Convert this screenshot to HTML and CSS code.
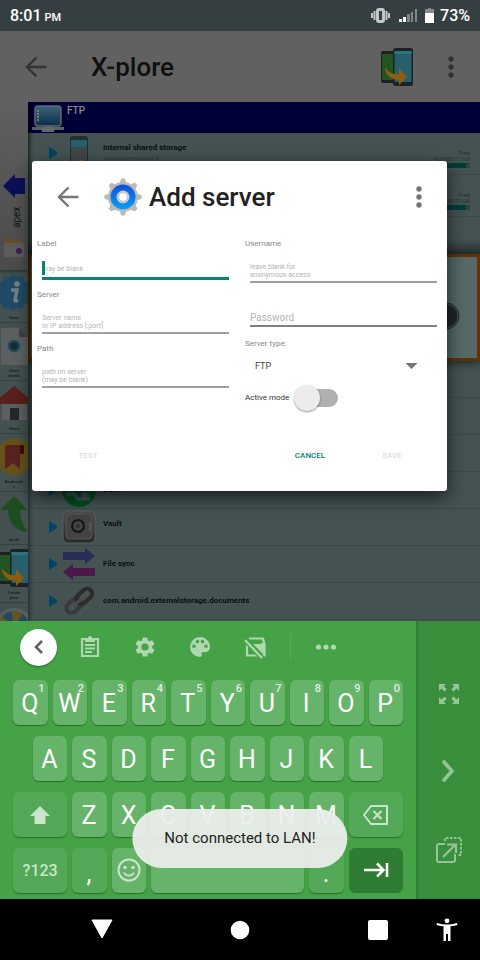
FILE: index.html
```html
<!DOCTYPE html>
<html lang="en">
<head>
<meta charset="utf-8">
<meta name="viewport" content="width=device-width, initial-scale=1">
<title>X-plore</title>
<link rel="stylesheet" href="styles.css">
</head>
<body>
<svg class="defs" aria-hidden="true">
  <defs>
    <linearGradient id="screen" x1="0" y1="0" x2="0" y2="1"><stop offset="0" stop-color="#3b6478"/><stop offset="1" stop-color="#0c2c48"/></linearGradient>
    <linearGradient id="ring" x1="0" y1="0" x2="0" y2="1"><stop offset="0" stop-color="#0d4fd8"/><stop offset="1" stop-color="#0aa0f5"/></linearGradient>
    <linearGradient id="metal" x1="0" y1="0" x2="0" y2="1"><stop offset="0" stop-color="#4c4c4c"/><stop offset="1" stop-color="#292929"/></linearGradient>
    <symbol id="back" viewBox="0 0 24 24"><path d="M12.500 2.500 3 12l9.500 9.500M3.500 12H22.500" fill="none" stroke="currentColor" stroke-width="2.400"/></symbol>
    <symbol id="dots" viewBox="0 0 8 24"><g fill="currentColor"><circle cx="4" cy="4" r="2.700"/><circle cx="4" cy="12" r="2.700"/><circle cx="4" cy="20" r="2.700"/></g></symbol>
    <symbol id="switch" viewBox="0 0 32 38">
      <rect x="0" y="3" width="18" height="32" rx="2" fill="#1c2122"/><rect x="1" y="6" width="16" height="26" fill="#235423"/>
      <rect x="12" y="0" width="20" height="38" rx="2.500" fill="#1c2122"/><rect x="13.500" y="3" width="17" height="31" fill="#285f6c"/><rect x="13.500" y="3" width="17" height="3" fill="#2f7383"/>
      <path d="M4 19c3 5 8 8 14 7v-6l8 9-8 8v-5C10 32 4 27 4 19z" fill="#8b5f0c"/>
    </symbol>
    <symbol id="play" viewBox="0 0 8 12"><path d="M0 0l8 5v2l-8 5z" fill="#004466"/></symbol>
  </defs>
</svg>
<div class="phone">
  <header class="status">
    <span class="time">8:01 <small>PM</small></span>
    <span class="status-icons">
      <svg class="vibrate" viewBox="0 0 19 15"><path d="M1 5v5M3.500 3v9M15.500 3v9M18 5v5" stroke="#c3c6c7" stroke-width="2"/><rect x="6.500" y="1.500" width="6" height="12" rx="1.500" fill="none" stroke="#c3c6c7" stroke-width="3"/></svg>
      <svg class="signal" viewBox="0 0 18 13"><path d="M0 10h3v3H0zM4 8h3v5H4z" fill="#fff"/><path d="M8 5h3v8H8zM12 3h2v10h-2zM16 0h2v13h-2z" fill="#818788"/></svg>
      <svg class="battery" viewBox="0 0 9 15"><path d="M3 0h3v1h3v5H0V1h3z" fill="#858b8c"/><path d="M0 5h9v10H0z" fill="#fff"/></svg>
      <span>73%</span>
    </span>
  </header>

  <main class="app">
    <div class="appbar">
      <button class="icon-btn" aria-label="Back"><svg class="i24"><use href="#back"/></svg></button>
      <h1>X-plore</h1>
      <button class="icon-btn" aria-label="Switch pane"><svg class="i-switch"><use href="#switch"/></svg></button>
      <button class="icon-btn" aria-label="More"><svg class="i-dots"><use href="#dots"/></svg></button>
    </div>
    <div class="panes">
      <aside class="side">
        <div class="tabs">
          <svg class="tab-arrow" viewBox="0 0 22 24"><path d="M0 12 12 0v4h10v16H12v4z" fill="#0b1058"/></svg>
          <span class="tab-name">apex</span>
          <svg class="tab-folder" viewBox="0 0 20 18"><path d="M1 0h7l2 2h9v8H1z" fill="#69501b"/><rect y="4" width="20" height="14" rx="2" fill="#5c5c5c"/><circle cx="15" cy="12" r="3" fill="#3b2049"/></svg>
        </div>
        <div class="tool"><svg viewBox="0 0 28 38"><path d="M14 0l4 3 5-1 1 5 5 2-1 5 2 5-2 5 1 4-5 2-2 5-5-1-4 3-4-3-5 1-2-5-4-2 1-5-3-4 3-5-1-5 5-2 1-5 5 1z" fill="#1f4a65"/><circle cx="17" cy="10" r="2.800" fill="#708185"/><path d="M11 16h6l-2 10q0 2 3 0" fill="none" stroke="#708185" stroke-width="3.500"/></svg><span>News</span></div>
        <div class="tool"><svg viewBox="0 0 28 38"><path d="M1 1h18l9 9v28H1z" fill="#5d6061"/><path d="M19 1v9h9z" fill="#3e4142"/><circle cx="14" cy="19" r="5" fill="#242829" stroke="#164b66" stroke-width="2.500"/></svg><span>Show<br>details</span></div>
        <div class="tool"><svg viewBox="0 0 28 38"><path d="M2 17h25v18H2z" fill="#5c5e5f"/><path d="M14 1 30 14v5H-2v-5z" fill="#59201c"/><path d="M10 23h9v12h-9z" fill="#232728"/></svg><span>Home</span></div>
        <div class="tool"><svg viewBox="0 0 28 38"><circle cx="14" cy="19" r="18.500" fill="#66511b"/><path d="M5 9q0-2 2-2h17v9h-4v15l-7-6-8 6z" fill="#59211f"/><path d="M20 7h4v9h-4z" fill="#3c0e0e"/></svg><span>Bookmark<br>s</span></div>
        <div class="tool"><svg viewBox="0 0 28 38"><path d="M14 0 28 14h-8q0 13 8 22Q9 34 8 14H0z" fill="#1f4d22"/></svg><span>Up dir</span></div>
        <div class="tool"><svg viewBox="2 0 28 38"><use href="#switch" width="32" height="38"/></svg><span>Switch<br>pane</span></div>
        <div class="tool"><svg viewBox="0 0 28 38"><circle cx="14" cy="19" r="18" fill="#56605f"/><circle cx="14" cy="19" r="10" fill="none" stroke="#64531f" stroke-width="10" stroke-dasharray="8 7"/><circle cx="14" cy="19" r="10" fill="none" stroke="#27465c" stroke-width="10" stroke-dasharray="7 8" stroke-dashoffset="7"/></svg></div>
      </aside>
      <section class="files">
        <div class="path"><svg viewBox="0 0 32 27"><path d="M0 22h32v3H0z" fill="#5b6266"/><path d="M12 20h8v3h2v4H10v-4h3z" fill="#62696d"/><rect x="3" y="1" width="26" height="20" rx="3" fill="url(#screen)" stroke="#5d686e" stroke-width="1.500"/><path d="M6 5v12" stroke="#71827c" stroke-width="2" stroke-dasharray="2 1"/></svg><span>FTP</span></div>
        <div class="row volume">
          <svg class="play"><use href="#play"/></svg>
          <svg class="pic" viewBox="0 0 34 34"><rect x="8" y="0" width="18" height="33" rx="3" fill="#252c2d"/><path d="M9 4h16v7H9z" fill="#24616e"/><path d="M9 11h16v18H9z" fill="#414748"/><circle cx="20" cy="29" r="5" fill="#77611b"/></svg>
          <div class="name"><b>Internal shared storage</b><small>/storage/emulated/0</small></div>
          <div class="free">Free<br>420MB/11GB<i></i></div>
        </div>
        <div class="row volume">
          <svg class="play"><use href="#play"/></svg>
          <span class="pic"></span>
          <div class="name"></div>
          <div class="free">Free<br>417MB/11GB<i></i></div>
        </div>
        <div class="spacer"></div>
        <div class="current"><svg viewBox="0 0 28 28"><circle cx="14" cy="14" r="12" fill="#1e2626" stroke="#465454" stroke-width="1"/><circle cx="14" cy="14" r="13" fill="none" stroke="#1e2626"/></svg></div>
        <div class="row"></div>
        <div class="row"></div>
        <div class="row"></div>
        <div class="row"><svg class="play"><use href="#play"/></svg><svg class="pic" viewBox="0 0 34 34"><circle cx="17" cy="17" r="17" fill="#034c22"/><path d="M4 21h8l4 5h12" fill="none" stroke="#445252" stroke-width="3"/><circle cx="23" cy="23" r="4" fill="#445252"/></svg><div class="name"><b>DLNA</b></div></div>
        <div class="row"><svg class="play"><use href="#play"/></svg><svg class="pic" viewBox="0 0 34 34"><rect x="1" y="1" width="32" height="32" rx="5" fill="url(#metal)" stroke="#585c5c"/><rect x="4" y="4" width="26" height="25" rx="4" fill="#434343" stroke="#555"/><circle cx="16" cy="16" r="6" fill="#343434" stroke="#161616" stroke-width="2"/><circle cx="16" cy="16" r="3.500" fill="none" stroke="#555"/><path d="M28 12v9" stroke="#686868"/></svg><div class="name two-line"><b>Vault</b></div></div>
        <div class="row"><svg class="play"><use href="#play"/></svg><svg class="pic" viewBox="0 0 34 34"><path d="M1 5h22V1l10 8-10 8v-4H1z" fill="#292d58"/><path d="M33 21H11v-4L1 25l10 8v-4h22z" fill="#4d174c"/></svg><div class="name"><b>File sync</b></div></div>
        <div class="row"><svg class="play"><use href="#play"/></svg><svg class="pic" viewBox="0 0 34 34"><g fill="none" stroke-width="4" transform="rotate(-42 17 17)"><rect x="2" y="12" width="17" height="10" rx="5" stroke="#383a3a"/><rect x="15" y="12" width="18" height="10" rx="5" stroke="#2b2b2b"/><path d="M10 17h13" stroke="#4b4c4c" stroke-width="3"/></g></svg><div class="name"><b>com.android.externalstorage.documents</b></div></div>
        <div class="row"></div>
      </section>
    </div>
  </main>

  <section class="keyboard" aria-label="Keyboard">
    <div class="kb-main">
      <div class="kb-tools">
        <button class="round" aria-label="Close toolbar"><svg viewBox="0 0 24 24"><path d="M15 6l-6 6 6 6" fill="none" stroke="#616161" stroke-width="2.600"/></svg></button>
        <button aria-label="Clipboard"><svg viewBox="0 0 24 24"><path d="M4 4h16v17H4z" fill="none" stroke="currentColor" stroke-width="2.200"/><path d="M7 3h3a2 2 0 0 1 4 0h3v4H7z" fill="currentColor"/><path d="M7 10h10M7 13.500h10M7 17h7" stroke="currentColor" stroke-width="1.800"/></svg></button>
        <button aria-label="Settings"><svg viewBox="0 0 24 24"><path fill="currentColor" d="M19.140 12.940c.04-.3.06-.61.06-.94s-.02-.64-.07-.94l2.030-1.580a.49.49 0 0 0 .12-.61l-1.920-3.320a.49.49 0 0 0-.59-.22l-2.390.96a7 7 0 0 0-1.620-.94l-.36-2.540a.48.48 0 0 0-.48-.41h-3.840a.48.48 0 0 0-.47.410l-.36 2.540c-.59.24-1.130.57-1.620.94l-2.390-.96a.48.48 0 0 0-.59.220L2.740 8.870a.48.48 0 0 0 .12.610l2.030 1.580a7 7 0 0 0 0 1.880l-2.030 1.580a.49.49 0 0 0-.12.610l1.920 3.320c.12.220.37.290.59.220l2.390-.96c.5.380 1.030.7 1.620.94l.36 2.540c.05.240.24.410.48.410h3.840c.24 0 .44-.17.470-.41l.36-2.540a7 7 0 0 0 1.620-.94l2.390.96c.22.080.47 0 .59-.22l1.920-3.320a.47.470 0 0 0-.12-.61zM12 15.600a3.600 3.600 0 1 1 0-7.200 3.600 3.600 0 0 1 0 7.200z"/></svg></button>
        <button aria-label="Theme"><svg viewBox="0 0 24 24"><path fill="currentColor" fill-rule="evenodd" d="M12 2a10 10 0 0 0 0 20c1.300 0 2-1 1.700-2.200-.5-1.600.1-2.800 1.800-2.800H18a4.500 4.500 0 0 0 4-5C22 6.500 17.500 2 12 2zM6 13a1.800 1.800 0 1 1 0-3.600A1.800 1.800 0 0 1 6 13zm3.500-4.700a1.800 1.800 0 1 1 0-3.600 1.800 1.800 0 0 1 0 3.600zm5 0a1.800 1.800 0 1 1 0-3.600 1.800 1.800 0 0 1 0 3.600zM18 13a1.800 1.800 0 1 1 0-3.600 1.800 1.800 0 0 1 0 3.600z"/></svg></button>
        <button aria-label="Theme off"><svg viewBox="0 0 24 24"><path d="M6 3.500h14l1.500 6v11H4V7M4 20.500h17" fill="none" stroke="currentColor" stroke-width="2.200"/><path d="M10 9h7l5-2v14z" fill="currentColor"/><path d="M2 5l17 18" stroke="#45a247" stroke-width="5"/><path d="M2 5l17 18" stroke="currentColor" stroke-width="2.200"/></svg></button>
        <button class="more" aria-label="More tools"><svg viewBox="0 0 24 24"><g fill="currentColor"><circle cx="4.500" cy="12" r="2.600"/><circle cx="12" cy="12" r="2.600"/><circle cx="19.500" cy="12" r="2.600"/></g></svg></button>
      </div>
      <div class="keys">
        <button>Q<sup>1</sup></button><button>W<sup>2</sup></button><button>E<sup>3</sup></button><button>R<sup>4</sup></button><button>T<sup>5</sup></button><button>Y<sup>6</sup></button><button>U<sup>7</sup></button><button>I<sup>8</sup></button><button>O<sup>9</sup></button><button>P<sup>0</sup></button>
        <button class="indent">A</button><button>S</button><button>D</button><button>F</button><button>G</button><button>H</button><button>J</button><button>K</button><button>L</button>
        <button class="wide alt newline" aria-label="Shift"><svg viewBox="0 0 24 24"><path d="M12 3 22 13h-4.500v8h-11v-8H2z" fill="currentColor"/></svg></button><button>Z</button><button>X</button><button>C</button><button>V</button><button>B</button><button>N</button><button>M</button><button class="wide alt" aria-label="Delete"><svg class="i-wide" viewBox="0 0 28 24"><path d="M9 3h16v18H9L2 12z" fill="none" stroke="currentColor" stroke-width="2" stroke-linejoin="round"/><path d="M11.500 8l8 8M19.500 8l-8 8" stroke="currentColor" stroke-width="2"/></svg></button>
        <button class="wide alt sym">?123</button><button class="alt mark">,</button><button class="emoji" aria-label="Emoji"><svg viewBox="0 0 24 24"><circle cx="12" cy="12" r="10.500" fill="none" stroke="currentColor" stroke-width="2"/><circle cx="8" cy="9.500" r="1.700" fill="currentColor"/><circle cx="16" cy="9.500" r="1.700" fill="currentColor"/><path d="M7 14.500a5.500 5.500 0 0 0 10 0" fill="none" stroke="currentColor" stroke-width="1.800"/></svg></button><button class="space" aria-label="Space"></button><button class="alt mark">.</button><button class="wide enter" aria-label="Next"><svg class="i-wide" viewBox="0 0 28 24"><path d="M2 11h19M15 4.500l6.500 6.500-6.500 6.500M25 4v14" fill="none" stroke="currentColor" stroke-width="2.500"/></svg></button>
      </div>
    </div>
    <div class="kb-side">
      <button aria-label="Full size"><svg viewBox="0 0 24 24"><path fill="currentColor" d="M2 2h7L6.700 4.300l3 3-2.200 2.200-3-3L2 9zM22 2v7l-2.500-2.500-3 3-2.200-2.200 3-3L15 2zM2 22v-7l2.500 2.500 3-3 2.200 2.200-3 3L9 22zM22 22h-7l2.300-2.300-3-3 2.200-2.200 3 3L22 15z"/></svg></button>
      <button aria-label="Move right"><svg viewBox="0 0 24 24"><path d="M7 3l8 9-8 9" fill="none" stroke="currentColor" stroke-width="3.600" stroke-linecap="round"/></svg></button>
      <button aria-label="Float"><svg class="i-float" viewBox="0 0 28 28"><path d="M10 8H4q-2 0-2 2v14q0 2 2 2h14q2 0 2-2v-6" fill="none" stroke="currentColor" stroke-width="2"/><path d="M8 21 20 9M12 8.500h9V17" fill="none" stroke="currentColor" stroke-width="2.200"/><path d="M10 5V2h16v17h-4" fill="none" stroke="currentColor" stroke-width="2" stroke-dasharray="2.500 1.500"/></svg></button>
    </div>
  </section>

  <nav class="navbar">
    <div class="nav-main">
      <button aria-label="Back"><svg viewBox="0 0 24 24"><path d="M2 2h20L12 20z" fill="#fff" stroke="#fff" stroke-linejoin="round"/></svg></button>
      <button aria-label="Home"><svg viewBox="0 0 24 24"><circle cx="12" cy="12" r="9.300" fill="#fff"/></svg></button>
      <button aria-label="Recents"><svg viewBox="0 0 24 24"><rect x="2" y="2" width="20" height="20" rx="2" fill="#fff"/></svg></button>
    </div>
    <button aria-label="Accessibility"><svg viewBox="0 0 24 24"><circle cx="12" cy="2.800" r="2.400" fill="#fff"/><path d="M2 5q10 3 20 0l.5 2q-3 1-7 1.300V23H13v-7h-2v7H8.500V8.300q-4-.3-7-1.300z" fill="#fff"/></svg></button>
  </nav>

  <div class="overlay">
    <form class="dialog" role="dialog" aria-labelledby="dlg-title">
      <div class="dlg-head">
        <button type="button" class="icon-btn" aria-label="Close"><svg class="i24"><use href="#back"/></svg></button>
        <svg class="gear" viewBox="0 0 38 38"><g fill="#b9b9b9"><circle cx="19" cy="19" r="15"/><path id="tooth" d="M15.500 6 17 1q2-1.500 4 0l1.500 5v26L21 37q-2 1.500-4 0l-1.500-5z"/><use href="#tooth" transform="rotate(45 19 19)"/><use href="#tooth" transform="rotate(90 19 19)"/><use href="#tooth" transform="rotate(135 19 19)"/></g><circle cx="19" cy="19" r="12.500" fill="url(#ring)"/><circle cx="19" cy="19" r="6.500" fill="#c4c9d0"/><circle cx="19" cy="19" r="3.800" fill="#fff"/></svg>
        <h2 id="dlg-title">Add server</h2>
        <button type="button" class="icon-btn" aria-label="Options"><svg class="i-dots"><use href="#dots"/></svg></button>
      </div>
      <div class="fields">
        <div class="col">
          <div class="field active"><label for="label">Label</label><input id="label" type="text" placeholder="may be blank"></div>
          <div class="field"><label for="server">Server</label><textarea id="server" rows="2" placeholder="Server name
or IP address [:port]"></textarea></div>
          <div class="field"><label for="path">Path</label><textarea id="path" rows="2" placeholder="path on server
(may be blank)"></textarea></div>
        </div>
        <div class="col">
          <div class="field"><label for="user">Username</label><textarea id="user" rows="2" placeholder="leave blank for
anonymous access"></textarea></div>
          <input class="password" type="password" placeholder="Password" aria-label="Password">
          <div class="field type"><label for="type">Server type:</label><div class="select"><select id="type"><option>FTP</option><option>SFTP</option></select><svg viewBox="0 0 12 6"><path d="M0 0h12L6 6z" fill="#757575"/></svg></div></div>
          <label class="toggle"><span>Active mode</span><input type="checkbox" role="switch"></label>
        </div>
      </div>
      <div class="actions">
        <button type="button" disabled>TEST</button>
        <button type="button">CANCEL</button>
        <button type="button" disabled>SAVE</button>
      </div>
    </form>
  </div>
  <div class="toast" role="status">Not connected to LAN!</div>
</div>
</body>
</html>
```
FILE: styles.css
```css
* { box-sizing: border-box; }
body { margin: 0; font-family: Roboto, "Liberation Sans", sans-serif; background: #000; }
button { border: 0; padding: 0; margin: 0; background: none; color: inherit; font: inherit; }
h1, h2 { margin: 0; font-size: 26px; font-weight: 500; }
svg { display: block; flex: none; }
.defs { position: absolute; width: 0; height: 0; }
.phone { position: relative; display: flex; flex-direction: column; height: 100vh; overflow: hidden; }

.status { display: flex; justify-content: space-between; align-items: center; height: 31px; padding: 0 10px; background: #353f41; color: #fff; font-size: 16px; font-weight: 500; }
.time small { font-size: 11px; margin-left: -1px; }
.status-icons { display: flex; align-items: center; }
.vibrate { width: 19px; height: 15px; margin-right: 9px; }
.signal { width: 18px; height: 13px; margin-right: 8px; }
.battery { width: 9px; height: 15px; margin-right: 6px; }

.app { flex: 1; min-height: 0; display: flex; flex-direction: column; }
.icon-btn { display: flex; align-items: center; justify-content: center; flex: none; }
.i24 { width: 24px; height: 24px; }
.i-dots { width: 8px; height: 24px; }
.i-switch { width: 32px; height: 38px; }
.appbar { display: flex; align-items: center; flex: none; height: 71px; padding: 0 25px 0 24px; background: #616161; color: #333; box-shadow: 0 1px 2px #4448; }
.appbar h1 { flex: 1; margin-left: 43px; color: #101010; }
.appbar .icon-btn:last-child { margin-left: 34px; }

.panes { flex: 1; min-height: 0; display: flex; overflow: hidden; background: #445252; }
.side { flex: none; width: 28px; background: #435150; box-shadow: 1px 0 5px #0009; z-index: 1; }
.tabs { display: flex; flex-direction: column; align-items: center; height: 168px; padding-top: 72px; background: linear-gradient(#606060, #4b4b4b); box-shadow: 0 1px 4px #0008; }
.tab-arrow { width: 22px; height: 24px; }
.tab-name { width: 12px; height: 26px; margin: 6px 0 9px 6px; writing-mode: vertical-rl; transform: rotate(180deg); font-size: 10px; line-height: 12px; text-align: center; color: #111; }
.tab-folder { width: 20px; height: 18px; }
.tool { padding: 4px 0 2px; border-bottom: 1px solid #364241; color: #141a1a; font-size: 4px; line-height: 5px; font-weight: 500; text-align: center; }
.tool svg { width: 28px; height: 38px; margin-bottom: 3px; }
.tool span { display: block; }

.files { flex: 1; min-width: 0; }
.path { display: flex; align-items: flex-start; height: 31px; padding: 3px 4px; background: #000036; color: #888; font-size: 10px; line-height: 12px; font-weight: 500; }
.path svg { width: 32px; height: 27px; margin-right: 3px; }
.row { display: flex; align-items: center; height: 37px; padding: 0 10px 0 21px; border-bottom: 1px solid #3c4948; }
.volume { height: 42px; align-items: flex-start; padding-top: 3px; }
.play { width: 8px; height: 12px; margin-right: 5px; }
.volume .play { margin-top: 11px; }
.pic { flex: none; width: 34px; height: 34px; margin-right: 7px; }
.name { flex: 1; min-width: 0; color: #0b0f0f; font-size: 8px; line-height: 10px; }
.name b { display: block; font-weight: 700; }
.name small { display: block; color: #2f3939; font-size: 6px; }
.two-line { padding-bottom: 6px; }
.volume .name { padding-top: 7px; }
.free { padding-top: 14px; color: #2a3333; font-size: 6px; line-height: 6px; text-align: right; }
.free i { display: block; width: 62px; height: 5px; border-right: 4px solid #354040; background: #003c36; margin-top: 1px; }
.spacer { height: 37px; background: linear-gradient(#445252 60%, #263030); }
.current { display: flex; align-items: center; justify-content: flex-end; height: 107px; padding: 16px 17px 0 0; border: 3px solid #633200; background: #566868; box-shadow: 0 2px 8px #0008; }
.current svg { width: 28px; height: 28px; }

.keyboard { flex: none; display: flex; background: #45a247; }
.kb-main { flex: 1; min-width: 0; padding: 6px 13px; }
.kb-tools { display: flex; align-items: center; height: 40px; margin-bottom: 13px; padding-left: 7px; color: #afd8b0; }
.kb-tools button { display: flex; align-items: center; justify-content: center; width: 55px; }
.kb-tools svg { width: 24px; height: 24px; }
.kb-tools .round { width: 37px; height: 37px; margin-right: 5px; border-radius: 50%; background: #fff; box-shadow: 0 1px 2px #0006; }
.kb-tools .more { width: 70px; height: 26px; margin-left: 8px; border-left: 1px solid #5aac5c; }
.keys { display: grid; grid-template-columns: repeat(20, 1fr); grid-auto-rows: 45px; gap: 11px 5px; }
.keys button { position: relative; grid-column-end: span 2; display: flex; align-items: center; justify-content: center; min-width: 0; padding: 2px 1px 0 0; border-radius: 6px; background: #66b46a; box-shadow: 0 1px 1px #0005; color: #fff; font-size: 25px; line-height: 18px; }
.keys sup { position: absolute; top: 4px; right: 3px; font-size: 11px; line-height: 9px; font-weight: 500; color: #e0f0e0; }
.keys .indent { grid-column: 2 / span 2; }
.keys .wide { grid-column-end: span 3; padding: 0; }
.keys .newline { grid-column-start: 1; }
.keys .space { grid-column-end: span 8; }
.keys .alt { background: #54a958; color: #cbe5cc; }
.keys .mark { padding-top: 6px; color: #fff; }
.keys .sym { font-size: 16px; font-weight: 500; }
.keys .emoji { padding: 0 1px 1px 0; color: #cbe5cc; }
.keys .enter { background: #2f7d32; box-shadow: none; }
.keys svg { width: 24px; height: 24px; }
.keys .i-wide { width: 28px; }
.kb-side { flex: none; display: flex; flex-direction: column; justify-content: center; gap: 53px; width: 64px; padding: 25px 0 0 2px; align-items: center; background: #3a8f3d; box-shadow: inset 2px 0 2px #0002; color: #97c599; }
.kb-side svg { width: 24px; height: 24px; }
.kb-side .i-float { width: 28px; height: 28px; }

.navbar { flex: none; display: flex; justify-content: space-between; align-items: center; height: 61px; padding: 0 21px 0 90px; background: #000; }
.nav-main { display: flex; gap: 114px; }
.navbar svg { width: 24px; height: 24px; }

.overlay { position: absolute; inset: 161px 33px auto 32px; z-index: 2; }
.dialog { padding: 0 10px 21px 5px; border-radius: 3px; background: #fff; box-shadow: 0 6px 18px #000a; }
.dlg-head { display: flex; align-items: center; height: 72px; padding: 0 14px 0 19px; margin-bottom: 4px; color: #757575; }
.gear { width: 38px; height: 38px; margin: 0 7px 0 24px; }
.dlg-head h2 { flex: 1; color: #212121; }
.fields { display: grid; grid-template-columns: 1fr 1fr; gap: 16px; }
.col { min-width: 0; }
.field { position: relative; margin-bottom: 8px; font-size: 8px; color: #888; }
.field label { display: block; line-height: 14px; }
.field textarea, .field input, .password { display: block; width: calc(100% - 5px); margin: 0 0 0 5px; border: 0; border-bottom: 2px solid #a0a0a0; border-radius: 0; background: none; outline: 0; font-family: inherit; color: #212121; }
.field textarea { height: 32px; padding: 12px 0 2px; font-size: 7px; line-height: 8px; resize: none; overflow: hidden; }
.field input { height: 29px; padding: 9px 0 0; border-bottom: 3px solid #048472; font-size: 7px; }
.active::after { content: ""; position: absolute; left: 5px; top: 24px; width: 3px; height: 14px; background: #048472; }
::placeholder { color: #b3b3b3; opacity: 1; }
.password { height: 30px; margin-top: 14px; padding: 12px 0 0; border-bottom-color: #808080; font-size: 10px; }
.type { margin: 10px 0 0; }
.select { display: flex; align-items: center; height: 30px; padding: 0 19px 0 10px; }
.select select { flex: 1; appearance: none; border: 0; padding: 0; background: none; color: #444; font: 9px Roboto, sans-serif; }
.select svg { width: 13px; height: 6px; }
.toggle { display: flex; align-items: center; gap: 5px; height: 33px; color: #333; font-size: 8px; }
.toggle input { appearance: none; position: relative; width: 44px; height: 18px; margin: 0; border-left: 10px solid #fff; border-radius: 0 9px 9px 0; background: #b0b0b0; }
.toggle input::before { content: ""; position: absolute; left: -10px; top: -4px; width: 26px; height: 26px; border-radius: 50%; background: #ececec; box-shadow: 0 1px 2px #0006; }
.actions { display: flex; align-items: center; height: 30px; margin: 26px 4px 0 0; font-size: 8px; font-weight: 500; color: #048472; }
.actions button { width: 82px; }
.actions button:first-child { margin: 0 auto 0 10px; }
.actions button:disabled { color: #dcdcdc; }

.toast { position: absolute; left: 50%; bottom: 92px; z-index: 3; transform: translateX(-50%); padding: 0 32px; border-radius: 30px; background: #eeeeeeed; color: #222; font-size: 15px; line-height: 59px; white-space: nowrap; }
```
